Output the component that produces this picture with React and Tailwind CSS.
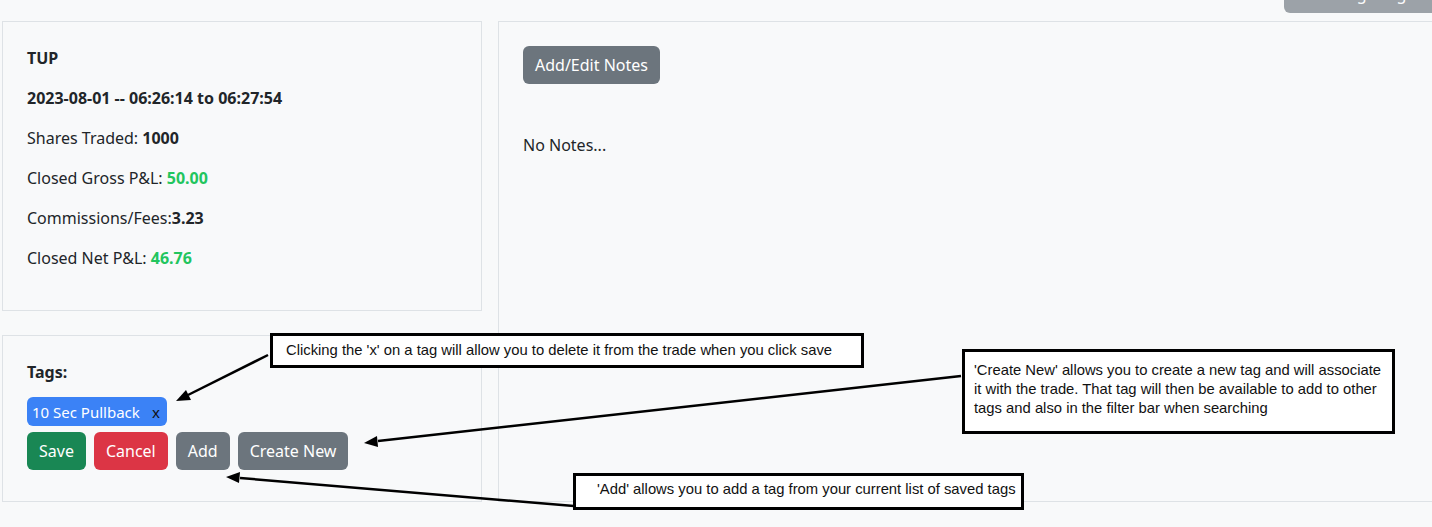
import React from "react";

const font = { fontFamily: '"Noto Sans", "Open Sans", sans-serif' };

function Note({ className, children }) {
  return (
    <div
      className={
        "absolute bg-white border-[3px] border-black text-[14.8px] leading-[19px] text-[#111] whitespace-nowrap " +
        className
      }
      style={{ fontFamily: '"Liberation Sans", Arial, sans-serif' }}
    >
      {children}
    </div>
  );
}

export default function App() {
  return (
    <div
      className="relative w-[1432px] h-[527px] overflow-hidden bg-[#f8f9fa] text-[#212529] text-[16px] leading-[24px]"
      style={font}
    >
      {/* button cut off at the top */}
      <div className="absolute left-[1284px] top-[-25px] w-[160px] h-[38px] rounded-md bg-[#6c757d] opacity-65 text-white flex items-center justify-end pr-[30px] whitespace-nowrap">
        Manage Tags
      </div>

      <div className="flex gap-4 pt-[21px] pl-[2px]">
        <div className="w-[480px] shrink-0 flex flex-col gap-6">
          <div className="border border-[#dee2e6] p-6 pb-2 h-[290px]">
            <p className="font-bold mb-4">TUP</p>
            <p className="font-bold mb-4">2023-08-01 -- 06:26:14 to 06:27:54</p>
            <p className="mb-4">
              Shares Traded: <b>1000</b>
            </p>
            <p className="mb-4">
              Closed Gross P&amp;L: <b className="text-[#22c55e]">50.00</b>
            </p>
            <p className="mb-4">
              Commissions/Fees:<b>3.23</b>
            </p>
            <p className="mb-4">
              Closed Net P&amp;L: <b className="text-[#22c55e]">46.76</b>
            </p>
          </div>

          <div className="border border-[#dee2e6] px-6 pt-6 h-[167px]">
            <p className="font-bold">Tags:</p>
            <div className="mt-[13px] flex items-center justify-between h-[29px] w-[140px] rounded-md bg-[#3b82f6] pl-[5px] pr-[7px] text-white text-[15px] whitespace-nowrap">
              <span>10 Sec Pullback</span>
              <span className="text-[#111]">x</span>
            </div>
            <div className="mt-[6px] flex gap-2 text-white">
              <button className="h-[38px] px-3 rounded-md bg-[#198754]">Save</button>
              <button className="h-[38px] px-3 rounded-md bg-[#dc3545]">Cancel</button>
              <button className="h-[38px] px-3 rounded-md bg-[#6c757d]">Add</button>
              <button className="h-[38px] px-3 rounded-md bg-[#6c757d]">Create New</button>
            </div>
          </div>
        </div>

        <div className="flex-1 h-[481px] border border-[#dee2e6] border-r-0 p-6">
          <button className="h-[38px] px-3 rounded-md bg-[#6c757d] text-white">
            Add/Edit Notes
          </button>
          <p className="mt-[49px]">No Notes...</p>
        </div>
      </div>

      {/* annotation arrows */}
      <svg
        className="absolute left-0 top-0 pointer-events-none"
        width="1432"
        height="527"
      >
        <g stroke="#000" strokeWidth="2.5" fill="none">
          <line x1="268" y1="355" x2="188" y2="395" />
          <line x1="961" y1="376" x2="378" y2="441" />
          <line x1="574" y1="506" x2="240" y2="478" />
        </g>
        <g fill="#000">
          <polygon points="176,401 186,390 191,400" />
          <polygon points="364,443 377,436 378,447" />
          <polygon points="226,477 240,472 239,483" />
        </g>
      </svg>

      <Note className="left-[270px] top-[333px] w-[594px] h-[35px] pl-[13px] pt-[5px]">
        Clicking the 'x' on a tag will allow you to delete it from the trade when you click save
      </Note>
      <Note className="left-[962px] top-[349px] w-[433px] h-[85px] pl-[9px] pt-[9px]">
        'Create New' allows you to create a new tag and will associate
        <br />
        it with the trade. That tag will then be available to add to other
        <br />
        tags and also in the filter bar when searching
      </Note>
      <Note className="left-[573px] top-[473px] w-[451px] h-[37px] pl-[21px] pt-[4px]">
        'Add' allows you to add a tag from your current list of saved tags
      </Note>
    </div>
  );
}
